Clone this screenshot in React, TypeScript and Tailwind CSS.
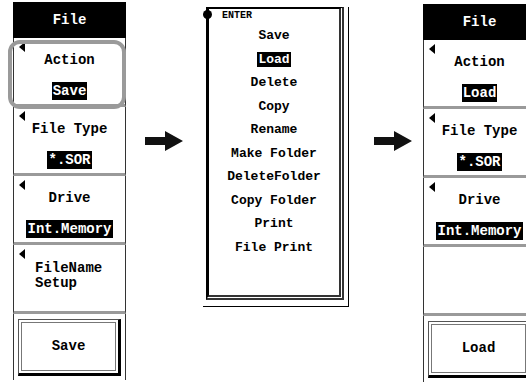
import React from 'react';

const mono = "font-['Liberation_Mono','DejaVu_Sans_Mono',monospace]";

function Tri() {
  return <span className="absolute left-[5px] top-[4px] h-0 w-0 border-y-[5px] border-r-[6px] border-y-transparent border-r-black" />;
}

function Section({ label, value, children }: { label?: string; value?: string; children?: React.ReactNode }) {
  return (
    <div className="relative h-[69px] border-x border-[#333] border-b-[3px] border-b-[#9a9a9a] bg-white">
      {label && <Tri />}
      {label && (
        <div className="flex flex-col items-center pt-[13px]">
          <div className="h-[18px] leading-[18px]">{label}</div>
          {value && <div className="mt-[13px] bg-black px-[1px] h-[18px] leading-[18px] text-white">{value}</div>}
        </div>
      )}
      {children}
    </div>
  );
}

function ActionBtn({ text }: { text: string }) {
  return (
    <div className="h-[66px] border-x border-[#333] px-[4px] pt-[5px]">
      <div className="relative h-[57px] border border-[#555] border-r-[3px] border-b-[3px] border-r-black border-b-black p-[2px]">
        <div className="flex h-full items-center justify-center border border-[#777]">{text}</div>
      </div>
    </div>
  );
}

function Panel({ action, last, hasName, highlight }: { action: string; last: string; hasName: boolean; highlight?: boolean }) {
  return (
    <div className="relative w-[113px] shrink-0">
      <div className="flex h-[36px] items-center justify-center bg-black text-white">File</div>
      <Section label="Action" value={action} />
      <Section label="File Type" value="*.SOR" />
      <Section label="Drive" value="Int.Memory" />
      <Section>
        {hasName && (
          <>
            <Tri />
            <div className="pl-[21px] pt-[16px] leading-[15px]">
              FileName
              <br />
              Setup
            </div>
          </>
        )}
      </Section>
      <ActionBtn text={last} />
      {highlight && (
        <div className="absolute left-[-5px] top-[38px] h-[69px] w-[118px] rounded-[12px] border-[4px] border-[#9a9a9a]" />
      )}
    </div>
  );
}

function Arrow() {
  return (
    <svg width="38" height="20" viewBox="0 0 38 20" className="shrink-0">
      <path d="M0 6H20V0L38 10L20 20V14H0Z" fill="#111" />
    </svg>
  );
}

const items = ['Save', 'Load', 'Delete', 'Copy', 'Rename', 'Make Folder', 'DeleteFolder', 'Copy Folder', 'Print', 'File Print'];

function Popup() {
  return (
    <div className="relative mt-[5px] w-[146px] shrink-0 border-r border-b border-black pb-[6px] pl-[3px] pr-[4px]">
      <div className="relative mt-[7px] h-[293px] border-l-[3px] border-t-2 border-black border-r-[5px] border-b-[5px] border-r-[#333] border-b-[#333] [border-right-style:double] [border-bottom-style:double]">
        <div className="flex flex-col items-center pt-[18px] text-[13px]">
          {items.map((t) => (
            <div key={t} className="h-[23.5px] leading-[18px]">
              <span className={t === 'Load' ? 'bg-black px-[1px] text-white' : ''}>{t}</span>
            </div>
          ))}
        </div>
      </div>
      <span className="absolute left-[0px] top-[3px] h-[9px] w-[9px] rounded-full bg-black" />
      <span className="absolute left-[19px] top-[3px] text-[10px] leading-[12px]">ENTER</span>
    </div>
  );
}

export default function App() {
  return (
    <div className={`h-[382px] w-[526px] overflow-hidden bg-white text-[14px] font-bold text-black ${mono}`}>
      <div className="flex items-start">
        <div className="ml-[13px] mt-[2px]">
          <Panel action="Save" last="Save" hasName highlight />
        </div>
        <div className="ml-[19px] mt-[131px]">
          <Arrow />
        </div>
        <div className="ml-[20px]">
          <Popup />
        </div>
        <div className="ml-[25px] mt-[131px]">
          <Arrow />
        </div>
        <div className="ml-[11px] mt-[4px]">
          <Panel action="Load" last="Load" hasName={false} />
        </div>
      </div>
    </div>
  );
}
